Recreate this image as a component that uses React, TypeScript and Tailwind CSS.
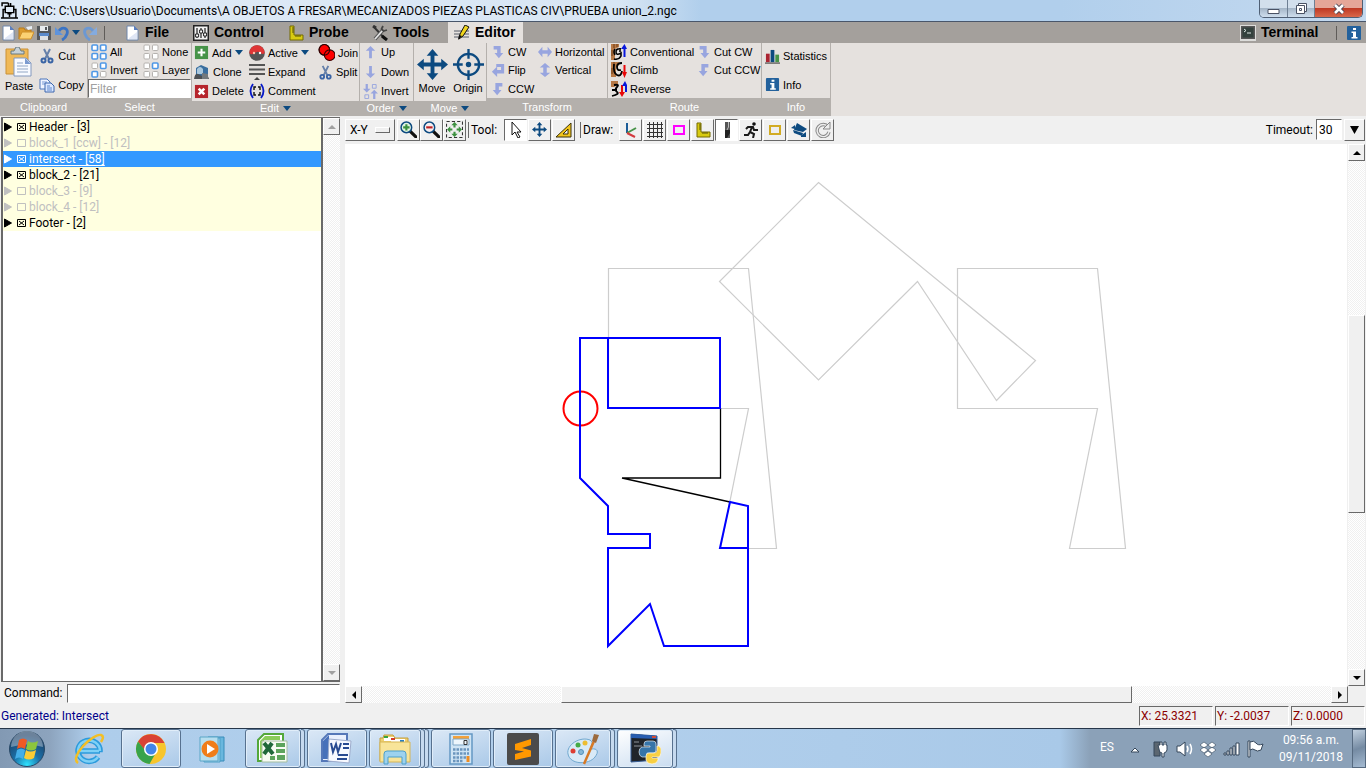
import React from "react";

type IconProps = { name: string; size?: number };

const shapes: Record<string, React.ReactNode> = {
  app: (
    <g fill="none" stroke="#000" strokeWidth="1.4">
      <path d="M1 4V1h6M4 4h8v6H4z M7 1v3M9 1v3M0 15h16M2 15V7h2M14 15V7h-2M8 10v4M6 11h4" />
    </g>
  ),
  page: (
    <g>
      <path d="M3 1h7l4 4v10H3z" fill="#fff" stroke="#6f87ad" />
      <path d="M10 1v4h4z" fill="#5b7fc0" />
      <path d="M5 13l8-6v7H5z" fill="#dfe6f5" />
    </g>
  ),
  folder: (
    <g>
      <path d="M1 14V3h5l1 2h6v3" fill="#dc9b2d" stroke="#b97a18" />
      <path d="M1 14L4 7h12l-3 7z" fill="#fbd173" stroke="#cf8f28" />
      <path d="M8 2l6-1v3l-4 1z" fill="#e9eef5" />
    </g>
  ),
  save: (
    <g>
      <path d="M1 1h14v14H1z" fill="#55585c" />
      <path d="M4 1h8v5H4z" fill="#e8ebee" />
      <path d="M3 8h10v3H3z" fill="#5c8bcc" />
      <path d="M4 11h8v4H4z" fill="#dfe2e6" />
      <path d="M9 2h2v3H9z" fill="#55585c" />
    </g>
  ),
  undo: (
    <g>
      <path d="M5 6C8 1 15 3 13 9c-1 3-3 5-5 6" fill="none" stroke="#3b74c5" strokeWidth="2.8" />
      <path d="M1 2v8h8z" fill="#5e93dc" />
    </g>
  ),
  redo: (
    <g>
      <path d="M11 6C8 1 1 3 3 9c1 3 3 5 5 6" fill="none" stroke="#6c98d2" strokeWidth="2.8" />
      <path d="M15 2v8H7z" fill="#84abdf" />
    </g>
  ),
  control: (
    <g>
      <path d="M0 0h16v16H0z" fill="#222" />
      <path d="M1.5 1.5h13v13h-13z" fill="#f3f3f3" />
      <path d="M4 3v10M8 3v10M12 3v10" stroke="#222" strokeWidth="1.2" />
      <path d="M2.6 9h3v3h-3zM6.6 5h3v3h-3zM10.6 8h3v3h-3z" fill="#fff" stroke="#222" />
    </g>
  ),
  ruler: (
    <g>
      <path d="M2 1h4v9h9v5H2z" fill="#d8cb10" stroke="#746b00" />
      <path d="M4 3h2M4 5h2M4 7h2M8 10v2M10 10v2M12 10v2" stroke="#57500a" />
    </g>
  ),
  tools: (
    <g fill="none">
      <path d="M2 2l11 12" stroke="#333" strokeWidth="2" />
      <path d="M11 5L3 14" stroke="#555" strokeWidth="3.6" />
      <path d="M11 5L3 14" stroke="#e4e4e4" strokeWidth="1.8" />
      <path d="M11 1L9.500 4l2 2L15 5" stroke="#444" strokeWidth="1.8" />
      <path d="M1 1l3 2" stroke="#333" strokeWidth="3" />
      <path d="M10 11l5 4" stroke="#111" strokeWidth="3" />
    </g>
  ),
  editor: (
    <g>
      <path d="M0 6h15M0 9h15M0 12h15" stroke="#555a66" />
      <path d="M11 0l4 2-6 9-4 3 1-5z" fill="#f1d51c" stroke="#111" />
      <path d="M5 10l3 1-4 4z" fill="#111" />
    </g>
  ),
  terminal: (
    <g>
      <path d="M0 0h16v16H0z" fill="#dcdcda" />
      <path d="M1 1h14v13H1z" fill="#555" />
      <path d="M2.500 2.500h11v10h-11z" fill="#33413d" />
      <path d="M4 4l2 1.500L4 7M7 8h4" stroke="#dfe8e5" fill="none" />
    </g>
  ),
  info: (
    <g>
      <path d="M1 2q0-1 1-1h12q1 0 1 1v12q0 1-1 1H2q-1 0-1-1z" fill="#23619c" />
      <path d="M7 3h3v2H7zM5.500 6.500H10V12h1.500v1.500h-6V12H7V8H5.500z" fill="#fff" />
    </g>
  ),
  paste: (
    <g>
      <path d="M1 2h22v25H1z" fill="#f0b957" stroke="#ca9137" />
      <path d="M6 4h3l2-4h3l2 4h3v3H6z" fill="#c7d2d8" stroke="#697a80" />
      <path d="M9 11h12l5 5v13H9z" fill="#f8faff" stroke="#8499bd" />
      <path d="M20 11l6 6h-6z" fill="#7a9ad0" />
      <path d="M12 16h6M12 19h11M12 22h11M12 25h11" stroke="#92a7c5" />
    </g>
  ),
  cut: (
    <g fill="none" stroke="#3a64a5">
      <path d="M5 1l5 10M11 1L6 11" stroke="#6680a9" strokeWidth="2" />
      <circle cx="4.500" cy="12.500" r="2" strokeWidth="2" />
      <circle cx="11.500" cy="12.500" r="2" strokeWidth="2" />
    </g>
  ),
  copy: (
    <g>
      <path d="M1 2h7l3 3v7H1z" fill="#eef3ff" stroke="#4c77bd" />
      <path d="M3 5h5M3 7h5" stroke="#7a9bd6" />
      <path d="M6 6h6l3 3v6H6z" fill="#dbe7ff" stroke="#3c67ae" />
      <path d="M8 9h3M8 11h5M8 13h5" stroke="#5f88cc" />
    </g>
  ),
  plus: (
    <g>
      <path d="M1 1h14v14H1z" fill="#479348" />
      <path d="M8 4v8M4 8h8" stroke="#fff" strokeWidth="2.200" />
    </g>
  ),
  active: (
    <g>
      <circle cx="8" cy="8" r="7.800" fill="#555" />
      <path d="M.3 8a7.700 7.700 0 0 1 15.400 0c-3 3-5-2-8-1S3 11 .3 8z" fill="#df3535" />
      <circle cx="5" cy="8" r="1.200" fill="#ffc0a8" />
      <circle cx="11" cy="8" r="1.200" fill="#fff" />
    </g>
  ),
  join: (
    <g fill="#f00" stroke="#300">
      <circle cx="6" cy="5.500" r="5" />
      <circle cx="11" cy="10.500" r="5" />
      <circle cx="6" cy="5.500" r="5" fill="none" />
    </g>
  ),
  clone: (
    <g>
      <path d="M2 4l5-3 7 3v7l-6 2-6-3z" fill="#3a6e9f" />
      <path d="M3 5q3-4 6 0v5H3z" fill="#a9c7dd" />
      <path d="M0 15q1-6 4-5l4 2 5-2 2 5z" fill="#4d5053" />
      <path d="M8 9l6 1v5H8z" fill="#73787c" />
    </g>
  ),
  expand: (
    <g>
      <path d="M0 1h16M0 5.500h16M0 10h16" stroke="#555" strokeWidth="1.800" />
      <path d="M8 13l3 3H5z" fill="#444" />
    </g>
  ),
  del: (
    <g>
      <path d="M1 1h14v14H1z" fill="#b6252c" />
      <path d="M5 5l6 6M11 5l-6 6" stroke="#fff" strokeWidth="2.800" />
    </g>
  ),
  comment: (
    <g fill="none">
      <path d="M4 1Q-1 8 4 15M12 1q5 7 0 14" stroke="#0719c8" strokeWidth="1.800" />
      <path d="M5 7V4h2M9 4h2v3M5 9v3h2M9 12h2V9" stroke="#111" strokeWidth="1.400" />
    </g>
  ),
  up: <path d="M8 1l5 5H9.500v8h-3V6H3z" fill="#98a5df" />,
  down: <path d="M8 15l5-5H9.500V2h-3v8H3z" fill="#98a5df" />,
  invertOrder: (
    <g>
      <path d="M4 9l4-4H5.200V0H2.800v5H0zM12 6l4 4h-2.800v6h-2.400v-6H8z" fill="#98a5df" />
      <path d="M10 .5h4v4h-4zM2 11.500h4v4H2z" fill="none" stroke="#98a5df" />
    </g>
  ),
  move: (
    <g fill="#0c4a80">
      <path d="M16 0l6 7h-4v7h7v-4l7 6-7 6v-4h-7v7h4l-6 7-6-7h4v-7H7v4l-7-6 7-6v4h7V7h-4z" />
    </g>
  ),
  origin: (
    <g fill="none" stroke="#0c4a80" strokeWidth="2.400">
      <circle cx="16" cy="16" r="11" />
      <path d="M16 0v10M16 22v10M0 16h10M22 16h10" />
      <circle cx="16" cy="16" r="2.800" fill="#0c4a80" stroke="none" />
    </g>
  ),
  cw: <path d="M3 1h8v8h3l-5 6-5-6h3V5H3z" fill="#98a5df" />,
  ccw: <path d="M13 1H5v8H2l5 6 5-6H9V5h4z" fill="#98a5df" />,
  flip: <path d="M6 1h9v11H7v4L1 10l6-6v4h4.500V4.500H6z" fill="#98a5df" />,
  horiz: <path d="M0 8l5-6v4h6V2l5 6-5 6v-4H5v4z" fill="#98a5df" />,
  vert: <path d="M8 0l6 5h-4v6h4l-6 5-6-5h4V5H2z" fill="#98a5df" />,
  conventional: (
    <g fill="none">
      <path d="M0 0h8v3L4 5v11H0z" fill="#b87945" />
      <path d="M3 0v4M6 0v3M1 6v6" stroke="#6d3c16" />
      <path d="M10 5Q5 4 5 8t5 1v3q-2 4-7 3M4 5q-2 3 0 6M9 4v4" stroke="#000" strokeWidth="1.600" />
      <path d="M13.500 13V4" stroke="#0818dd" strokeWidth="2" />
      <path d="M13.500 0l2.500 5h-6z" fill="#0818dd" />
    </g>
  ),
  climb: (
    <g fill="none">
      <path d="M0 0h8v3L5 5v10H0z" fill="#b87945" />
      <path d="M3 0v4M1 6v6" stroke="#6d3c16" />
      <path d="M3 2q-1 9 3 11t5-4M11 1Q6 1 6 5t4 3" stroke="#000" strokeWidth="1.800" />
      <path d="M13.500 3v8" stroke="#e80808" strokeWidth="2" />
      <path d="M13.500 16l2.500-6h-5z" fill="#e80808" />
    </g>
  ),
  reverse: (
    <g fill="none">
      <path d="M0 0h7v4L3 6H0z" fill="#b87945" />
      <path d="M3 4q6-1 3 2t0 5-5 4M1 9h5" stroke="#000" strokeWidth="1.800" />
      <path d="M11 4v8" stroke="#e80808" strokeWidth="2" />
      <path d="M11 16l3-5H8z" fill="#e80808" />
      <path d="M14 0l2 4v7h-2V5h-3z" fill="#0818dd" />
    </g>
  ),
  stats: (
    <g>
      <path d="M1 5h4v9H1z" fill="#aa2330" />
      <path d="M6 1h4v13H6z" fill="#0c4a80" />
      <path d="M11 6h4v8h-4z" fill="#479348" />
      <path d="M0 15h16" stroke="#222" />
    </g>
  ),
  zoomIn: (
    <g>
      <path d="M9 9l7 7" stroke="#111" strokeWidth="3" />
      <circle cx="6" cy="6" r="5" fill="#dff2e0" stroke="#0c4a80" strokeWidth="1.400" />
      <path d="M6 3v6M3 6h6" stroke="#3c913f" strokeWidth="2" />
    </g>
  ),
  zoomOut: (
    <g>
      <path d="M9 9l7 7" stroke="#111" strokeWidth="3" />
      <circle cx="6" cy="6" r="5" fill="#f5eef0" stroke="#0c4a80" strokeWidth="1.400" />
      <path d="M3 6h6" stroke="#bd2024" strokeWidth="2" />
    </g>
  ),
  fit: (
    <g>
      <path d="M.5.500h15v15H.5z" fill="none" stroke="#333" strokeDasharray="3 2" />
      <path d="M8 1l3 3H9v2H7V4H5zM8 15l3-3H9v-2H7v2H5zM1 8l3-3v2h2v2H4v2zM15 8l-3-3v2h-2v2h2v2z" fill="#3c913f" />
    </g>
  ),
  pointer: <path d="M4 0v13l3-3 3 6 2-1-3-5h4z" fill="#fff" stroke="#111" />,
  triangle: (
    <g>
      <path d="M0 15L15 1v14z" fill="#f3c51b" stroke="#3a3008" />
      <path d="M7 12l5-5v5z" fill="#efefef" stroke="#3a3008" />
    </g>
  ),
  axes: (
    <g fill="none" strokeWidth="2">
      <path d="M4 1v10" stroke="#1b5c98" />
      <path d="M4 11l9-5" stroke="#479348" />
      <path d="M4 11l8 4" stroke="#d33a3e" />
    </g>
  ),
  grid: <path d="M0 2.500h16M0 6.500h16M0 10.500h16M0 14.500h16M2.500 0v16M6.500 0v16M10.500 0v16M14.500 0v16" stroke="#333" />,
  magenta: <path d="M3 4h10v8H3z" fill="none" stroke="#f0f" strokeWidth="2" />,
  golden: <path d="M3 4h10v8H3z" fill="#eee" stroke="#d2ab22" strokeWidth="2" />,
  bit: (
    <g>
      <path d="M6 0h5v16H6z" fill="#555" />
      <path d="M9 0h1v5L8 9v7H7V9l2-4z" fill="#bbb" />
      <path d="M6 8h5v3l-3 5H6z" fill="#222" />
    </g>
  ),
  runner: (
    <g fill="none" stroke="#1a1a1a" strokeWidth="2">
      <circle cx="11" cy="2" r="1.800" fill="#111" stroke="none" />
      <path d="M3 7l2-2h5l1 3h4M9 5L7 10l4 2-1 4M7 10l-2 3H1" />
    </g>
  ),
  camera: (
    <g fill="#0c4a80">
      <path d="M6 1l10 6-4 3-9-2z" />
      <path d="M2 8l10 3-1 3-8-3z" />
      <path d="M12 12l3-2v5h-5v-1z" />
      <path d="M0 6l4-3v4z" />
    </g>
  ),
  refresh: (
    <g fill="none">
      <path d="M13 5a6 6 0 1 0 1 5" stroke="#888" strokeWidth="3.400" />
      <path d="M13 5a6 6 0 1 0 1 5" stroke="#eee" strokeWidth="1.400" />
      <path d="M15 0v7H8z" fill="#eee" stroke="#888" />
    </g>
  ),
};

function Icon({ name, size = 16 }: IconProps) {
  const box = name === "move" || name === "origin" ? "0 0 32 32" : name === "paste" ? "0 0 28 30" : "0 0 16 16";
  return (
    <svg width={size} height={size} viewBox={box} className="shrink-0" aria-hidden="true">
      {shapes[name]}
    </svg>
  );
}

function Squares({ on }: { on: number[] }) {
  return (
    <svg width="16" height="16" viewBox="0 0 16 16" className="shrink-0" aria-hidden="true">
      {[0, 1, 2, 3].map((i) => (
        <rect
          key={i}
          x={i % 2 ? 9.5 : 1}
          y={i > 1 ? 9.5 : 1}
          width="5.500"
          height="5.500"
          rx="1"
          fill="#fff"
          stroke={on.includes(i) ? "#4f98e6" : "#b5b2af"}
          strokeWidth={on.includes(i) ? 1.6 : 1}
        />
      ))}
    </svg>
  );
}

function Caret() {
  return (
    <svg width="8" height="5" viewBox="0 0 8 5" className="shrink-0" aria-hidden="true">
      <path d="M0 0h8L4 5z" fill="#0c4a80" />
    </svg>
  );
}

function Cmd({ icon, label, caret, size }: { icon: React.ReactNode; label: string; caret?: boolean; size?: number }) {
  return (
    <button type="button" className="flex items-center gap-[3px] whitespace-nowrap">
      {typeof icon === "string" ? <Icon name={icon} size={size ?? 15} /> : icon}
      <span>{label}</span>
      {caret && <Caret />}
    </button>
  );
}

function Group({ title, caret, width, children }: { title: string; caret?: boolean; width: string; children: React.ReactNode }) {
  return (
    <section className={`flex shrink-0 flex-col border-r border-[#b4b0ac] ${width}`}>
      <div className="min-h-0 flex-1">{children}</div>
      <div
        className={`flex items-center justify-center gap-1 bg-[#b4b0ac] text-white ${caret ? "h-[15px]" : "h-[18px]"}`}
      >
        {title}
        {caret && <Caret />}
      </div>
    </section>
  );
}

function Tab({ icon, label, width, active }: { icon: string; label: string; width: string; active?: boolean }) {
  return (
    <button
      type="button"
      className={`flex h-full items-center gap-[5px] text-[14px] font-bold ${width} ${active ? "bg-[#e5e1de]" : ""}`}
    >
      <Icon name={icon} />
      {label}
    </button>
  );
}

const raised = "border border-t-white border-l-white border-r-[#696969] border-b-[#696969] bg-[#f0f0f0]";
const sunken = "border border-t-[#696969] border-l-[#696969] border-r-white border-b-white";
const trough =
  "bg-[repeating-conic-gradient(#ffffff_0_25%,#f0f0f0_0_50%)] bg-[length:2px_2px]";

function Tool({ name, pressed, size = 16 }: { name: string; pressed?: boolean; size?: number }) {
  return (
    <button
      type="button"
      aria-label={name}
      className={`flex h-[22px] w-[23px] items-center justify-center ${pressed ? `${sunken} bg-white` : raised}`}
    >
      <Icon name={name} size={size} />
    </button>
  );
}

function ScrollButton({ dir, muted }: { dir: "up" | "down" | "left" | "right"; muted?: boolean }) {
  const d = { up: "M0 6h8L4 2z", down: "M0 2h8L4 6z", left: "M6 0v8L2 4z", right: "M2 0v8l4-4z" }[dir];
  return (
    <button type="button" aria-label={`Scroll ${dir}`} className={`flex h-[17px] w-[17px] shrink-0 items-center justify-center ${raised}`}>
      <svg width="8" height="8" viewBox="0 0 8 8" aria-hidden="true">
        <path d={d} fill={muted ? "#a0a0a0" : "#000"} />
      </svg>
    </button>
  );
}

const blocks = [
  { label: "Header - [3]", on: true },
  { label: "block_1 [ccw] - [12]", on: false },
  { label: "intersect - [58]", on: true, selected: true },
  { label: "block_2 - [21]", on: true },
  { label: "block_3 - [9]", on: false },
  { label: "block_4 - [12]", on: false },
  { label: "Footer - [2]", on: true },
];

function BlockRow({ label, on, selected }: { label: string; on: boolean; selected?: boolean }) {
  const tone = selected ? "bg-[#3399ff] text-white" : on ? "bg-[#ffffe0] text-black" : "bg-[#ffffe0] text-[#c0c0c0]";
  return (
    <li className={`flex h-4 items-center whitespace-nowrap ${tone}`}>
      <svg width="26" height="12" viewBox="0 0 26 12" className="shrink-0" fill="none" stroke="currentColor" aria-hidden="true">
        <path d="M1.500 2v8l7-4z" fill="currentColor" />
        <path d="M14.500 2.500h8v7h-8z" />
        {on && <path d="M16 4l5 4M21 4l-5 4" />}
      </svg>
      <span className={selected ? "underline underline-offset-2" : ""}>{label}</span>
    </li>
  );
}

function Ribbon() {
  return (
    <div className="flex h-[73px] shrink-0 bg-[#e5e1de] text-[11px]">
      <Group title="Clipboard" width="w-[88px]">
        <div className="flex h-full justify-between pr-[3px] pl-1">
          <button type="button" className="flex flex-col items-center gap-px pt-1">
            <Icon name="paste" size={30} />
            Paste
          </button>
          <div className="flex flex-col gap-3 pt-[5px]">
            <Cmd icon="cut" label="Cut" size={16} />
            <Cmd icon="copy" label="Copy" size={16} />
          </div>
        </div>
      </Group>
      <Group title="Select" width="w-[104px]">
        <div className="flex h-full flex-col">
          <div className="grid flex-1 grid-cols-[52px_1fr] items-center pl-[3px]">
            <Cmd icon={<Squares on={[0, 1, 2, 3]} />} label="All" />
            <Cmd icon={<Squares on={[]} />} label="None" />
            <Cmd icon={<Squares on={[1, 2]} />} label="Invert" />
            <Cmd icon={<Squares on={[1]} />} label="Layer" />
          </div>
          <input aria-label="Filter" placeholder="Filter" className={`h-[19px] w-full bg-white px-px text-[12px] placeholder:text-[#a0a0a0] ${sunken}`} />
        </div>
      </Group>
      <Group title="Edit" caret width="w-[168px]">
        <div className="grid h-full grid-cols-[55px_69px_1fr] items-center pl-[2px]">
          <Cmd icon="plus" label="Add" caret />
          <Cmd icon="active" label="Active" caret size={16} />
          <Cmd icon="join" label="Join" size={17} />
          <Cmd icon="clone" label="Clone" size={16} />
          <Cmd icon="expand" label="Expand" size={16} />
          <Cmd icon="cut" label="Split" />
          <Cmd icon="del" label="Delete" />
          <Cmd icon="comment" label="Comment" size={16} />
        </div>
      </Group>
      <Group title="Order" caret width="w-[54px]">
        <div className="grid h-full items-center pl-[3px]">
          <Cmd icon="up" label="Up" />
          <Cmd icon="down" label="Down" />
          <Cmd icon="invertOrder" label="Invert" />
        </div>
      </Group>
      <Group title="Move" caret width="w-[73px]">
        <div className="grid h-full grid-cols-2 pt-[6px]">
          {["Move", "Origin"].map((label) => (
            <button key={label} type="button" className="flex flex-col items-center">
              <Icon name={label.toLowerCase()} size={31} />
              {label}
            </button>
          ))}
        </div>
      </Group>
      <Group title="Transform" width="w-[121px]">
        <div className="grid h-full grid-cols-[47px_1fr] items-center pl-1">
          <Cmd icon="cw" label="CW" size={14} />
          <Cmd icon="horiz" label="Horizontal" size={14} />
          <Cmd icon="flip" label="Flip" size={14} />
          <Cmd icon="vert" label="Vertical" size={14} />
          <Cmd icon="ccw" label="CCW" size={14} />
        </div>
      </Group>
      <Group title="Route" width="w-[154px]">
        <div className="grid h-full grid-cols-[86px_1fr] items-center pl-[3px]">
          <Cmd icon="conventional" label="Conventional" size={16} />
          <Cmd icon="cw" label="Cut CW" size={14} />
          <Cmd icon="climb" label="Climb" size={16} />
          <Cmd icon="ccw" label="Cut CCW" size={14} />
          <Cmd icon="reverse" label="Reverse" size={16} />
        </div>
      </Group>
      <Group title="Info" width="w-[69px]">
        <div className="flex h-full flex-col items-start gap-3 pt-[5px] pl-[3px]">
          <Cmd icon="stats" label="Statistics" />
          <Cmd icon="info" label="Info" />
        </div>
      </Group>
    </div>
  );
}

function Drawing() {
  return (
    <svg viewBox="345 144 1002 541" preserveAspectRatio="xMinYMin meet" className="h-full w-full" fill="none" role="img" aria-label="Tool path">
      <g stroke="#cdcdcd" strokeWidth="1.200">
        <path d="M608.500 268.500h140l28 280h-56l28-140h-140z" />
        <path d="M957.500 268.500h140l28 280h-56l28-140h-140z" />
        <path d="M818.500 182.500l217 178-39 40-79-119-99 98.500-99-98.500z" />
      </g>
      <path d="M720.500 408v70H622l108 24" stroke="#000" strokeWidth="1.300" />
      <circle cx="580.500" cy="408.500" r="17" stroke="#f00" strokeWidth="2" />
      <g stroke="#00f" strokeWidth="2">
        <path d="M608 338h112v70H608z" />
        <path d="M608 338h-28v140l28 28v28h42v14h-42v98l42-42 14 42h84V506l-18-4-10 46h28" />
      </g>
    </svg>
  );
}

const apps: Record<string, React.ReactNode> = {
  IE: (
    <g fill="none">
      <path d="M27 18H7M27 19A11 10.500 0 1 0 25 24" stroke="#2c9bdc" strokeWidth="5.500" />
      <path d="M26 18H7M27 18A11 10.500 0 1 0 25 24" stroke="#7dd0f6" strokeWidth="2.500" />
      <path d="M5 30C-4 24 20 0 28 2c3 1 2 4 0 7" stroke="#f3bf25" strokeWidth="2.500" />
    </g>
  ),
  Chrome: (
    <g>
      <circle cx="16" cy="16" r="15" fill="#f7c52c" />
      <path d="M3 8.500A15 15 0 0 1 29.500 10H16a6 6 0 0 0-5.500 8.500z" fill="#d94335" />
      <path d="M3 8.500A15 15 0 0 0 14.500 31l6-10.500a6 6 0 0 1-9.500-2z" fill="#37a34b" />
      <circle cx="16" cy="16" r="7" fill="#fff" />
      <circle cx="16" cy="16" r="5.500" fill="#4285e8" />
    </g>
  ),
  Player: (
    <g>
      <path d="M11 4h16v24H11z" fill="#69b7de" stroke="#388cba" />
      <path d="M7 5h16v24H7z" fill="#9ccfe8" stroke="#4d9fc6" />
      <path d="M3 4h18v24H3z" fill="#b7deef" stroke="#5ba6c7" />
      <circle cx="13" cy="16" r="8.500" fill="#f07d19" />
      <path d="M10 11v10l8-5z" fill="#fff" />
    </g>
  ),
  Excel: (
    <g>
      <path d="M1 7l6-6h19v27H1z" fill="#fff" stroke="#54a83b" strokeWidth="2" />
      <path d="M3 8l5-5h15v4H7v18H3z" fill="#8bcc5b" />
      <path d="M5 8h25v21H5z" fill="#f7fbf3" stroke="#a3bda0" />
      <path d="M7 10l9 11M15 10L7 21" stroke="#20683a" strokeWidth="4" />
      <path d="M19 10h9v4h-9zM19 16h9v4h-9zM13 23h5v4h-5zM20 22h8v5h-8z" fill="#5ca45c" />
    </g>
  ),
  Word: (
    <g>
      <path d="M1 7l6-6h19v27H1z" fill="#e9f0fd" stroke="#5578b9" strokeWidth="2" />
      <path d="M2 8l6-6v24H2z" fill="#4771ba" />
      <path d="M8 6l22 2-2 22-21-2z" fill="#f7f9ff" stroke="#9daccc" />
      <path d="M10 10l2 9 3-8 2 8 3-9" fill="none" stroke="#284a91" strokeWidth="2" />
      <path d="M22 11h6M22 15h6M17 22h10M16 26h10" stroke="#284a91" strokeWidth="2" />
    </g>
  ),
  Explorer: (
    <g>
      <path d="M1 5h3l1-3h9l2 3h13v23H1z" fill="#f0d070" stroke="#c39f3e" />
      <path d="M12 6h14v4H12zM5 4h10v4H5z" fill="#fff" />
      <path d="M5 3h4v2H5z" fill="#39a43b" />
      <path d="M12 5h4v2h-4z" fill="#d33b2a" />
      <path d="M21 7h4v2h-4z" fill="#277fc4" />
      <path d="M1 9h30v20H1z" fill="#f8e499" stroke="#d5b656" />
      <path d="M5 31V21q0-3 3-3h16q3 0 3 3v10h-4v-7H9v7z" fill="#9dd2ee" stroke="#4c9fca" />
    </g>
  ),
  Calculator: (
    <g>
      <path d="M5 1h22v30H5z" fill="#cfe4f4" stroke="#6498c4" strokeWidth="1.500" />
      <path d="M8 3h16v3H8z" fill="#f2a13b" />
      <path d="M8 6h16v6H8z" fill="#edf6fc" stroke="#7ea7c7" />
      <path d="M19 7.500h3v4h-3z" fill="none" stroke="#333" />
      <path d="M8 16.500h16M8 20.500h16M8 24.500h16M8 28h10" stroke="#6b95bd" strokeWidth="2.500" strokeDasharray="2.500 1" />
      <path d="M23 23v6" stroke="#ef8c20" strokeWidth="3" />
    </g>
  ),
  Sublime: (
    <g>
      <rect width="32" height="32" rx="2" fill="#4b4b4b" />
      <path d="M8 11l16-5v6l-9 3 9 2.500v6L8 27v-6l9-2.500L8 17z" fill="#ff9800" />
    </g>
  ),
  Paint: (
    <g>
      <path d="M1 21C-1 12 13 3 23 7c5 3-1 7 1 9 7-1 8 3 4 8-6 8-25 8-27-3z" fill="#d9eaf7" stroke="#70a8cf" />
      <circle cx="6" cy="18" r="2.500" fill="#dd3d32" />
      <circle cx="11" cy="12" r="2.500" fill="#45ab48" />
      <circle cx="18" cy="10" r="2.500" fill="#edbd32" />
      <circle cx="14" cy="19" r="2.500" fill="#86b8d8" stroke="#5290bb" />
      <path d="M27 8L17 31" stroke="#d77925" strokeWidth="2.500" />
      <path d="M25 8l2-7 5 1-3 8z" fill="#9c6a3d" />
    </g>
  ),
  Python: (
    <g>
      <path d="M2 1l26 2v24L2 29z" fill="#20242a" stroke="#345c96" />
      <path d="M2 1l26 2v3L2 5z" fill="#285db0" />
      <path d="M23 3h4v2h-4z" fill="#d24a35" />
      <path d="M5 9h5M5 13h8" stroke="#8d9299" />
      <path d="M18 8h6q3 0 3 3v6q0 3-3 3h-6v4h-5q-3-1-3-5t3-5h8v-1h-6v-2q0-3 3-3z" fill="#3674a9" stroke="#fff" strokeWidth=".6" />
      <path d="M28 13h2q3 2 2 7t-3 4h-6v1h6v2q-1 4-6 4t-6-4v-4q0-3 3-3h5q3 0 3-3z" fill="#f8cf43" stroke="#fff" strokeWidth=".6" />
    </g>
  ),
};

const taskButtons = [
  { app: "IE" },
  { app: "Chrome", open: true },
  { app: "Player" },
  { app: "Excel", open: true, stack: 1 },
  { app: "Word", open: true },
  { app: "Explorer", open: true, stack: 2 },
  { app: "Calculator", open: true },
  { app: "Sublime", open: true },
  { app: "Paint", open: true, stack: 1 },
  { app: "Python", open: true, focused: true, stack: 1 },
];

function TaskButton({ app, open, focused, stack = 0 }: { app: string; open?: boolean; focused?: boolean; stack?: number }) {
  const frame = open ? "border-[#57718f] shadow-[inset_0_0_0_1px_#e0edf9]" : "border-transparent";
  const fill = focused
    ? "bg-[linear-gradient(160deg,#ffffff,#c9dcf0)]"
    : open
      ? "bg-[linear-gradient(160deg,#dbe8f6,#aac9e8)]"
      : "";
  return (
    <button type="button" aria-label={app} className="mr-[2px] flex w-[60px] shrink-0">
      <span className={`flex h-full flex-1 items-center justify-center rounded-[3px] border ${frame} ${fill}`}>
        <svg width="32" height="32" viewBox="0 0 32 32" aria-hidden="true">
          {apps[app]}
        </svg>
      </span>
      {Array.from({ length: stack }, (_, i) => (
        <span key={i} className="h-full w-1 rounded-r-[3px] border border-l-0 border-[#57718f] bg-[#c6daef]" />
      ))}
    </button>
  );
}

function Taskbar() {
  return (
    <footer className="flex h-10 shrink-0 border-t border-[#26364a] bg-[linear-gradient(90deg,#8299b3_0,#8da4be_50px,#aecdeb_90px,#b1cfec_620px,#a9c9e8_1060px,#8ba1b8_1090px,#8ba1b8_100%)]">
      <button type="button" aria-label="Start" className="flex w-[59px] shrink-0 items-center pl-2">
        <svg width="38" height="38" viewBox="0 0 38 38" aria-hidden="true">
          <defs>
            <radialGradient id="orb" cx="50%" cy="95%" r="85%">
              <stop offset="0" stopColor="#2ee3ff" />
              <stop offset=".45" stopColor="#1b70a8" />
              <stop offset="1" stopColor="#1c3f66" />
            </radialGradient>
          </defs>
          <circle cx="19" cy="19" r="17.500" fill="url(#orb)" stroke="#284866" />
          <path d="M3 17a16 16 0 0 1 32 0q-16-5-32 0z" fill="#fff" opacity=".35" />
          <path d="M11 10q4-3 8 0l-2 9q-4-3-8 0z" fill="#ee5a24" />
          <path d="M20 11q4 3 10 0l-2 8q-5 3-10 0z" fill="#8cc63e" />
          <path d="M9 20q4-3 8 0l-2 9q-4-3-8 0z" fill="#44aee8" />
          <path d="M18 20q4 3 10 0l-2 8q-5 3-10 0z" fill="#fbcc35" />
        </svg>
      </button>
      {taskButtons.map((b) => (
        <TaskButton key={b.app} {...b} />
      ))}
      <div className="ml-auto flex items-center font-['Roboto',sans-serif] text-[12px] text-white">
        <span className="mr-4 mb-1">ES</span>
        <svg width="136" height="20" viewBox="0 0 136 20" className="mr-1" aria-label="Notification icons" role="img">
          <g fill="#fff" stroke="#34465a" strokeWidth="1">
            <path d="M1 13l4-4 4 4z" />
            <path d="M24 3h6v14h-6z" fill="#5b6670" />
            <path d="M28 6h2V3h2v3h2V3h2v3h1v5q-1 3-3 3v4h-2v-4q-3 0-3-4z" />
            <path d="M47 7h3l5-4v14l-5-4h-3z" />
            <path d="M57 7q2 3 0 6M60 5q3 5 0 10" fill="none" stroke="#fff" strokeWidth="1.500" />
            <g strokeWidth=".6">
              <path d="M70 6l4-3 4 3-4 3zM78 6l4-3 4 3-4 3zM70 11l4-3 4 3-4 3zM78 11l4-3 4 3-4 3zM74 15l4-3 4 3-4 3z" />
            </g>
            <path d="M94 14h2v2h-2zM97 12h2v4h-2zM100 9h2v7h-2zM103 7h2v9h-2zM106 4h3v12h-3z" />
            <path d="M118 2h2v16h-2z" />
            <path d="M120 3q4-2 6 1t7 1l-2 6q-4 2-6 0t-5 0z" />
          </g>
        </svg>
        <div className="w-[82px] text-center leading-[17px]">
          <div>09:56 a.m.</div>
          <div>09/11/2018</div>
        </div>
        <div className="h-full w-[14px] border border-[#566a80] bg-[linear-gradient(160deg,#c0cfde,#758ba3_50%,#a5bbd2)]" />
      </div>
    </footer>
  );
}

export default function App() {
  return (
    <div className="flex h-screen flex-col overflow-hidden bg-[#f0f0f0] font-['Liberation_Sans',sans-serif] text-[12px] text-black">
      <header className="flex h-[22px] shrink-0 items-center border-b border-[#49566a] bg-[linear-gradient(90deg,#dfeaf6_0,#d8e6f4_620px,#b1cfec_700px,#b1cfec_1060px,#c4d9ef_100%)] pl-px">
        <Icon name="app" size={17} />
        <h1 className="ml-1 flex-1 truncate font-['Roboto',sans-serif] text-[12px]">
          bCNC: C:\Users\Usuario\Documents\A OBJETOS A FRESAR\MECANIZADOS PIEZAS PLASTICAS CIV\PRUEBA union_2.ngc
        </h1>
        <div className="mr-[3px] flex h-[18px] self-start overflow-hidden rounded-b-[5px] border border-t-0 border-[#4f5f74]">
          <button type="button" aria-label="Minimize" className="flex w-7 items-center justify-center border-r border-[#6e7f93] bg-[linear-gradient(#d2dfec_0_45%,#a5b6c8_50%,#cfdeed)]">
            <svg width="13" height="12" viewBox="0 0 13 12"><path d="M1 6.500h11v4H1z" fill="#fff" stroke="#4a5264" /></svg>
          </button>
          <button type="button" aria-label="Restore" className="flex w-[27px] items-center justify-center border-r border-[#6e7f93] bg-[linear-gradient(#d2dfec_0_45%,#a5b6c8_50%,#cfdeed)]">
            <svg width="13" height="13" viewBox="0 0 13 13" fill="#fff" stroke="#4a5264"><path d="M3.500 1.500h8v8h-8z" /><path d="M1.500 3.500h8v8h-8zM4.500 6.500h2v2h-2z" /></svg>
          </button>
          <button type="button" aria-label="Close" className="flex w-[47px] items-center justify-center bg-[linear-gradient(#e5a698_0_45%,#bf3a24_50%,#d9684b)]">
            <svg width="14" height="12" viewBox="0 0 14 12"><path d="M3 2l8 8M11 2l-8 8" stroke="#4a4150" strokeWidth="4.500" /><path d="M3 2l8 8M11 2l-8 8" stroke="#fff" strokeWidth="2.600" /></svg>
          </button>
        </div>
      </header>

      <nav className="flex h-[21px] shrink-0 items-center bg-[#a4a09c]">
        <div className="flex w-[124px] items-center gap-[2px]">
          <Icon name="page" />
          <Icon name="folder" />
          <Icon name="save" />
          <Icon name="undo" />
          <Caret />
          <Icon name="redo" />
          <span className="ml-1 h-[14px] w-px bg-[#5f5c59]" />
        </div>
        <Tab icon="page" label="File" width="w-[69px]" />
        <Tab icon="control" label="Control" width="w-[95px]" />
        <Tab icon="ruler" label="Probe" width="w-[84px]" />
        <Tab icon="tools" label="Tools" width="w-[76px]" />
        <Tab icon="editor" label="Editor" width="w-[75px] pl-[6px]" active />
        <div className="ml-auto flex items-center pr-1">
          <Tab icon="terminal" label="Terminal" width="w-[96px]" />
          <span className="mr-[9px] h-[14px] w-px bg-[#5f5c59]" />
          <Icon name="info" />
        </div>
      </nav>

      <Ribbon />

      <main className="flex min-h-0 flex-1 pt-px font-['Roboto',sans-serif]">
        <div className="flex w-[345px] shrink-0 flex-col pl-px">
          <div className="mr-[5px] flex min-h-0 flex-1 border-t border-b border-[#696969]">
            <ul className="min-w-0 flex-1 border-r-2 border-l-2 border-[#696969] bg-white pt-px text-[12px]">
              {blocks.map((b) => (
                <BlockRow key={b.label} {...b} />
              ))}
            </ul>
            <div className={`flex flex-col justify-between ${trough}`}>
              <ScrollButton dir="up" muted />
              <ScrollButton dir="down" muted />
            </div>
          </div>
          <div className="mt-px mr-[5px] flex h-[20px] items-center">
            <label htmlFor="command" className="w-[66px] pl-[3px] text-[12px]">Command:</label>
            <input id="command" className={`h-[19px] min-w-0 flex-1 bg-white ${sunken}`} />
          </div>
        </div>

        <div className="flex min-w-0 flex-1 flex-col">
          <div className="flex h-[27px] shrink-0 items-center pb-[2px]">
            <button type="button" className={`mr-[2px] flex h-[22px] w-[50px] items-center justify-between px-1 ${raised} text-[12px]`}>
              X-Y
              <span className={`h-[6px] w-[15px] ${raised}`} />
            </button>
            <Tool name="zoomIn" size={17} />
            <Tool name="zoomOut" size={17} />
            <Tool name="fit" size={17} />
            <span className="ml-[2px] h-4 w-px bg-[#696969]" />
            <span className="w-[35px] pl-[2px] text-[12px]">Tool:</span>
            <div className="flex gap-px">
              <Tool name="pointer" pressed />
              <Tool name="move" size={15} />
              <Tool name="triangle" />
            </div>
            <span className="ml-[5px] h-4 w-px bg-[#696969]" />
            <span className="w-[38px] pl-[2px] text-[12px]">Draw:</span>
            <div className="flex gap-px">
              <Tool name="axes" />
              <Tool name="grid" />
              <Tool name="magenta" />
              <Tool name="ruler" />
              <Tool name="bit" pressed />
              <Tool name="runner" />
              <Tool name="golden" />
              <Tool name="camera" />
              <Tool name="refresh" />
            </div>
            <label htmlFor="timeout" className="mr-[3px] ml-auto text-[12px]">Timeout:</label>
            <input id="timeout" defaultValue="30" className={`h-[21px] w-[26px] bg-white px-[2px] text-[12px] ${sunken}`} />
            <button type="button" aria-label="Timeout values" className={`mr-px ml-[2px] flex h-[22px] w-[21px] items-center justify-center ${raised}`}>
              <svg width="9" height="8" viewBox="0 0 9 8" aria-hidden="true"><path d="M0 0h9L4.500 8z" fill="#000" /></svg>
            </button>
          </div>
          <div className="flex min-h-0 flex-1">
            <div className="min-w-0 flex-1 bg-white">
              <Drawing />
            </div>
            <div className={`mr-px ml-px flex w-[17px] flex-col ${trough}`}>
              <ScrollButton dir="up" />
              <div className="flex-[155]" />
              <div className={`flex-[196] ${raised}`} />
              <div className="flex-[157]" />
              <ScrollButton dir="down" />
            </div>
          </div>
          <div className={`mr-[18px] flex h-[17px] shrink-0 ${trough}`}>
            <ScrollButton dir="left" />
            <div className="flex-[199]" />
            <div className={`flex-[571] ${raised}`} />
            <div className="flex-[199]" />
            <ScrollButton dir="right" />
          </div>
        </div>
      </main>

      <div className="flex h-[25px] shrink-0 items-center gap-[2px] px-px pt-px font-['Roboto',sans-serif] text-[12px]">
        <span className="flex-1 text-[#00008b]">Generated: Intersect</span>
        {["X: 25.3321", "Y: -2.0037", "Z: 0.0000"].map((t) => (
          <span key={t} className={`h-5 w-[74px] px-px leading-[18px] text-[#8b0000] ${sunken}`}>
            {t}
          </span>
        ))}
      </div>

      <Taskbar />
    </div>
  );
}
